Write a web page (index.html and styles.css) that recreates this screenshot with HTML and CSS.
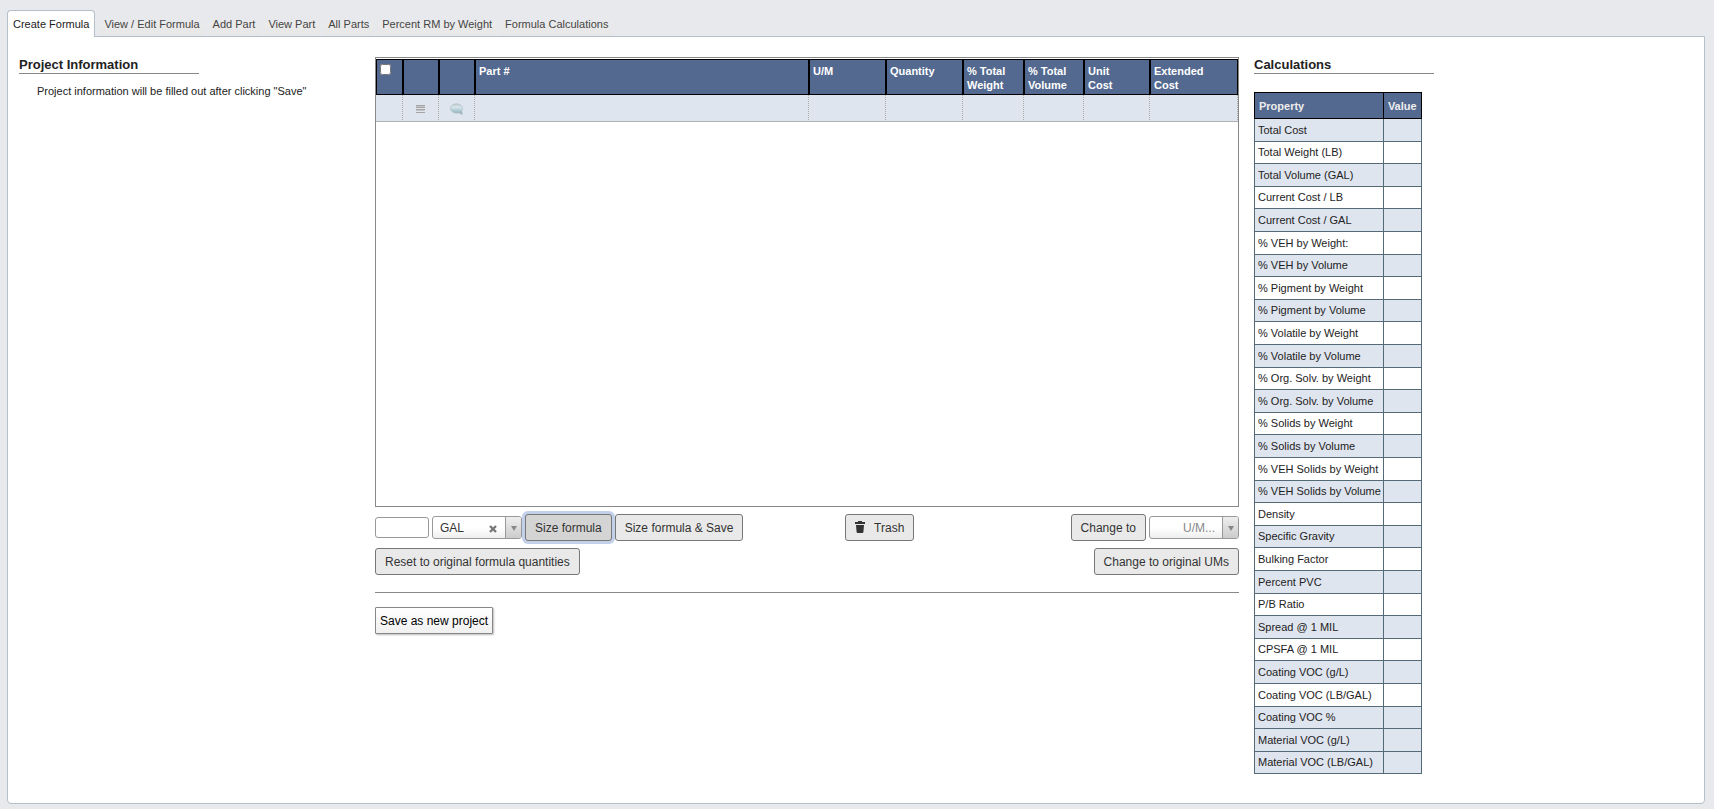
FILE: index.html
```html
<!DOCTYPE html>
<html lang="en">
<head>
  <meta charset="UTF-8">
  <title>Create Formula</title>
  <link rel="stylesheet" href="styles.css">
</head>
<body>
  <nav class="tabs">
    <a href="#create" class="tab active">Create Formula</a>
    <a href="#edit" class="tab">View / Edit Formula</a>
    <a href="#add-part" class="tab">Add Part</a>
    <a href="#view-part" class="tab">View Part</a>
    <a href="#all-parts" class="tab">All Parts</a>
    <a href="#percent-rm" class="tab">Percent RM by Weight</a>
    <a href="#calculations" class="tab">Formula Calculations</a>
  </nav>

  <main class="panel" id="create">
    <section class="project">
      <h2>Project Information</h2>
      <p>Project information will be filled out after clicking "Save"</p>
    </section>

    <section class="formula">
      <div class="grid-box">
        <table class="parts">
          <colgroup>
            <col class="col-check">
            <col class="col-icon">
            <col class="col-icon">
            <col>
            <col class="col-qty">
            <col class="col-qty">
            <col class="col-weight">
            <col class="col-volume">
            <col class="col-unit">
            <col class="col-ext">
          </colgroup>
          <thead>
            <tr>
              <th><input type="checkbox" aria-label="Select all parts"></th>
              <th></th>
              <th></th>
              <th>Part #</th>
              <th>U/M</th>
              <th>Quantity</th>
              <th>% Total<br>Weight</th>
              <th>% Total<br>Volume</th>
              <th>Unit<br>Cost</th>
              <th>Extended<br>Cost</th>
            </tr>
          </thead>
          <tbody>
            <tr>
              <td></td>
              <td>
                <svg class="icon" width="9" height="8" viewBox="0 0 9 8">
                  <path d="M0 0h9v1H0zM0 2h9v1H0zM0 4h9v1H0zM0 7h9v1H0z" fill="#a3a3a3"/>
                  <path d="M0 1h9v1H0zM0 5h9v1H0z" fill="#c4c6ca"/>
                </svg>
              </td>
              <td>
                <svg class="icon" width="14" height="13" viewBox="0 0 14 13">
                  <defs>
                    <linearGradient id="bubble" x1="0" y1="0" x2="0" y2="1">
                      <stop offset="0" stop-color="#b9c6cc"/>
                      <stop offset="0.35" stop-color="#d9e6ea"/>
                      <stop offset="0.65" stop-color="#b4d0d9"/>
                      <stop offset="1" stop-color="#93b1bc"/>
                    </linearGradient>
                  </defs>
                  <ellipse cx="6.500" cy="5.500" rx="6" ry="4.700" fill="url(#bubble)" stroke="#b1c3ca" stroke-width=".8"/>
                  <path d="M8 9.600L12.600 12l-.6-4z" fill="#9bb4bd"/>
                </svg>
              </td>
              <td></td>
              <td></td>
              <td></td>
              <td></td>
              <td></td>
              <td></td>
              <td></td>
            </tr>
          </tbody>
        </table>
      </div>

      <div class="toolbar">
        <div class="group">
          <input type="text" class="size-input" aria-label="Formula size">
          <div class="combo">
            <select aria-label="Size unit">
              <option>GAL</option>
              <option>LB</option>
            </select>
            <button type="button" class="clear" aria-label="Clear unit">
              <svg width="8" height="8" viewBox="0 0 8 8" stroke="#777" stroke-width="2.400"><path d="M1 1l6 6M7 1L1 7"/></svg>
            </button>
            <span class="arrow"></span>
          </div>
          <button type="button" class="btn focused">Size formula</button>
          <button type="button" class="btn">Size formula &amp; Save</button>
        </div>
        <div class="group">
          <button type="button" class="btn">
            <svg class="trash" width="10" height="12" viewBox="0 0 10 12" fill="#333"><path d="M3 0h4v1h3v2H0V1h3zM1 4h8l-.6 7q-.1 1-1 1H2.600q-.9 0-1-1z"/></svg>
            Trash
          </button>
        </div>
        <div class="group right">
          <button type="button" class="btn">Change to</button>
          <div class="combo empty">
            <select aria-label="Change unit">
              <option>U/M...</option>
              <option>GAL</option>
              <option>LB</option>
            </select>
            <span class="arrow"></span>
          </div>
        </div>
      </div>

      <div class="toolbar-second">
        <button type="button" class="btn">Reset to original formula quantities</button>
        <button type="button" class="btn">Change to original UMs</button>
      </div>

      <hr>
      <button type="button" class="save">Save as new project</button>
    </section>

    <section class="calculations">
      <h2>Calculations</h2>
      <table class="calc">
        <thead>
          <tr><th>Property</th><th>Value</th></tr>
        </thead>
        <tbody>
          <tr><td>Total Cost</td><td></td></tr>
          <tr><td>Total Weight (LB)</td><td></td></tr>
          <tr><td>Total Volume (GAL)</td><td></td></tr>
          <tr><td>Current Cost / LB</td><td></td></tr>
          <tr><td>Current Cost / GAL</td><td></td></tr>
          <tr><td>% VEH by Weight:</td><td></td></tr>
          <tr><td>% VEH by Volume</td><td></td></tr>
          <tr><td>% Pigment by Weight</td><td></td></tr>
          <tr><td>% Pigment by Volume</td><td></td></tr>
          <tr><td>% Volatile by Weight</td><td></td></tr>
          <tr><td>% Volatile by Volume</td><td></td></tr>
          <tr><td>% Org. Solv. by Weight</td><td></td></tr>
          <tr><td>% Org. Solv. by Volume</td><td></td></tr>
          <tr><td>% Solids by Weight</td><td></td></tr>
          <tr><td>% Solids by Volume</td><td></td></tr>
          <tr><td>% VEH Solids by Weight</td><td></td></tr>
          <tr><td>% VEH Solids by Volume</td><td></td></tr>
          <tr><td>Density</td><td></td></tr>
          <tr><td>Specific Gravity</td><td></td></tr>
          <tr><td>Bulking Factor</td><td></td></tr>
          <tr><td>Percent PVC</td><td></td></tr>
          <tr><td>P/B Ratio</td><td></td></tr>
          <tr><td>Spread @ 1 MIL</td><td></td></tr>
          <tr><td>CPSFA @ 1 MIL</td><td></td></tr>
          <tr><td>Coating VOC (g/L)</td><td></td></tr>
          <tr><td>Coating VOC (LB/GAL)</td><td></td></tr>
          <tr><td>Coating VOC %</td><td></td></tr>
          <tr class="shaded"><td>Material VOC (g/L)</td><td></td></tr>
          <tr><td>Material VOC (LB/GAL)</td><td></td></tr>
        </tbody>
      </table>
    </section>
  </main>
</body>
</html>
```
FILE: styles.css
```css
* {
  box-sizing: border-box;
}

body {
  margin: 0;
  padding: 10px 9px 6px 7px;
  background: #e8e9ed;
  color: #222;
  font-family: "Liberation Sans", Arial, sans-serif;
  font-size: 11px;
}

button, input, select {
  font-family: inherit;
}

/* tabs */
.tabs {
  display: flex;
  gap: 5px;
}

.tab {
  height: 26px;
  padding: 0 4px;
  line-height: 28px;
  color: #444;
  text-decoration: none;
  background: linear-gradient(#e8e9ed 45%, #ebebeb 50%, #e7e7e8);
}

.tab.active {
  position: relative;
  height: 27px;
  margin-bottom: -1px;
  padding: 0 5px;
  line-height: 26px;
  color: #222;
  background: #fff;
  border: 1px solid #b4bfcc;
  border-bottom: none;
  border-radius: 4px 4px 0 0;
}

.panel {
  display: grid;
  grid-template-columns: 341fr 864fr 439fr;
  gap: 15px;
  padding: 20px 11px 29px;
  background: #fff;
  border: 1px solid #b4bfcc;
  border-radius: 0 0 4px 4px;
}

h2 {
  width: 180px;
  margin: 0;
  line-height: 16px;
  font-size: 13px;
  border-bottom: 1px solid #888;
}

.project p {
  margin: 11px 0 0 18px;
  line-height: 13px;
}

/* parts grid */
.grid-box {
  height: 450px;
  padding-top: 1px;
  border: 1px solid #888;
}

.parts {
  width: 100%;
  table-layout: fixed;
  border-collapse: separate;
  border-spacing: 0;
}

.col-check { width: 27px; }
.col-icon { width: 36px; }
.col-qty { width: 77px; }
.col-weight { width: 61px; }
.col-volume { width: 60px; }
.col-unit { width: 66px; }
.col-ext { width: 88px; }

.parts th {
  height: 36px;
  padding: 4px 3px 2px;
  line-height: 14px;
  text-align: left;
  vertical-align: top;
  color: #fff;
  background: #54698f;
  border: 1px solid #000;
}

.parts th input {
  display: block;
  width: 11px;
  height: 11px;
  margin: 0;
}

.parts td {
  height: 27px;
  padding: 2px 0 0;
  text-align: center;
  background: #dfe5ef;
  border-right: 1px dotted #aaa;
  border-bottom: 1px solid #b0b0b0;
}

.icon {
  display: block;
  margin: 0 auto;
}

/* controls below the grid */
.toolbar {
  display: grid;
  grid-template-columns: 470fr 194fr 200fr;
  margin-top: 7px;
}

.group {
  display: flex;
  align-items: center;
  gap: 3px;
}

.right {
  justify-content: flex-end;
}

.btn {
  height: 27px;
  padding: 0 9px;
  font-size: 12px;
  color: #333;
  white-space: nowrap;
  background: #e9e9e9;
  border: 1px solid #777;
  border-radius: 3px;
}

.btn.focused {
  background: #d4d4d4;
  box-shadow: 0 0 0 3px #c3d0e9;
}

.trash {
  margin-right: 6px;
  vertical-align: -1px;
}

.size-input {
  width: 54px;
  height: 21px;
  border: 1px solid #999;
  border-radius: 3px;
}

.combo {
  position: relative;
  width: 90px;
  height: 23px;
}

.combo select {
  width: 100%;
  height: 100%;
  padding: 0 38px 0 7px;
  font-size: 12px;
  color: #333;
  appearance: none;
  background: linear-gradient(#fff 50%, #eee);
  border: 1px solid #999;
  border-radius: 3px;
}

.combo.empty select {
  padding: 0 23px 0 0;
  color: #888;
  text-align: right;
  text-align-last: right;
}

.clear {
  position: absolute;
  top: 9px;
  right: 25px;
  padding: 0;
  line-height: 0;
  background: none;
  border: none;
}

.arrow {
  position: absolute;
  top: 1px;
  right: 1px;
  bottom: 1px;
  width: 16px;
  background: linear-gradient(#eee, #ccc);
  border-left: 1px solid #999;
  border-radius: 0 2px 2px 0;
  pointer-events: none;
}

.arrow::after {
  content: "";
  position: absolute;
  top: 9px;
  left: 5px;
  border: 3px solid transparent;
  border-top: 5px solid #888;
  border-bottom: none;
}

.toolbar-second {
  display: flex;
  justify-content: space-between;
  margin-top: 7px;
}

hr {
  margin: 17px 0 14px;
  border: none;
  border-top: 1px solid #888;
}

.save {
  height: 27px;
  padding: 0 4px;
  font-size: 12px;
  color: #000;
  background: linear-gradient(#fff, #f0f0f0);
  border: 1px solid #888;
  border-radius: 1px;
  box-shadow: 1px 1px 2px #bbb;
}

/* calculations */
.calc {
  margin-top: 18px;
  border-collapse: collapse;
}

.calc th {
  height: 26px;
  padding: 0 4px;
  text-align: left;
  color: #eee;
  background: #54698f;
  border: 1px solid #000;
}

.calc td {
  height: 23px;
  padding: 0 2px 0 3px;
  line-height: 13px;
  border: 1px solid #546a76;
}

.calc tr:nth-child(5n+2) td,
.calc tr:nth-child(5n+4) td {
  height: 22px;
}

.calc tbody tr:nth-child(odd),
.calc .shaded {
  background: #dfe5ef;
}
```
